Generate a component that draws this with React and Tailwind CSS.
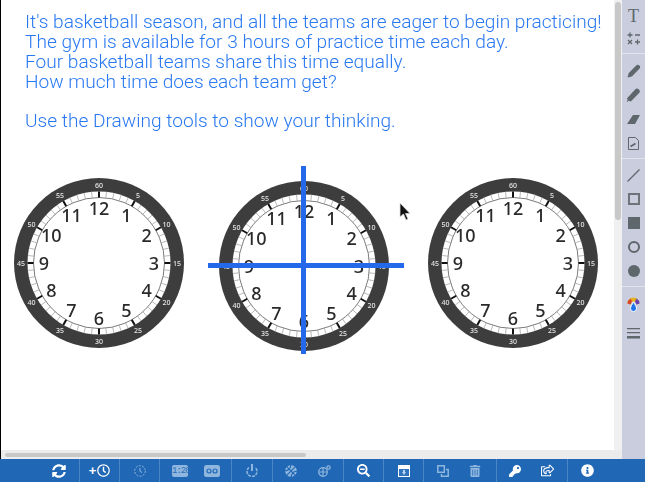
import React from 'react'
import { FaSyncAlt, FaTrashAlt, FaKey, FaInfoCircle, FaSearchMinus, FaRegClock, FaBasketballBall, FaRegShareSquare } from 'react-icons/fa'

const PROMPT = [
  "It's basketball season, and all the teams are eager to begin practicing!",
  'The gym is available for 3 hours of practice time each day.',
  'Four basketball teams share this time equally.',
  'How much time does each team get?',
]

const Clock = ({ className = '', crossed }) => {
  const c = 86
  const ticks = Array.from({ length: 60 }, (_, i) => i)
  const polar = (r, deg) => {
    const a = ((deg - 90) * Math.PI) / 180
    return [c + r * Math.cos(a), c + r * Math.sin(a)]
  }
  return (
    <div className={`relative w-[172px] h-[172px] shrink-0 ${className}`}>
      <svg className="will-change-transform" width="172" height="172" viewBox="0 0 172 172">
        <circle cx={c} cy={c} r="85" fill="#3d3d3d" />
        <circle cx={c} cy={c} r="71.500" fill="#fff" />
        <circle cx={c} cy={c} r="65.500" fill="none" stroke="#444" strokeWidth="0.7" />
        {ticks.map((i) => {
          const big = i % 5 === 0
          const [x1, y1] = polar(big ? 65.5 : 65.5, i * 6)
          const [x2, y2] = polar(71.5, i * 6)
          return <line key={i} x1={x1} y1={y1} x2={x2} y2={y2} stroke={big ? '#111' : '#999'} strokeWidth={big ? 2 : 0.7} />
        })}
        {Array.from({ length: 12 }, (_, i) => {
          const [x, y] = polar(78, (i + 1) * 30)
          return (
            <text key={i} x={x} y={y + 2.5} textAnchor="middle" fontSize="7" fontWeight="500" fill="#e8e8e8" fontFamily="'Noto Sans', sans-serif">
              {(i + 1) * 5}
            </text>
          )
        })}
        {Array.from({ length: 12 }, (_, i) => {
          const [x, y] = polar(55, (i + 1) * 30)
          return (
            <text key={i} x={x} y={y + 6.500} textAnchor="middle" fontSize="18" fontWeight="500" fill="#2a2a2a" fontFamily="'Noto Sans', sans-serif">
              {i + 1}
            </text>
          )
        })}
      </svg>
      {crossed && (
        <>
          <div className="absolute left-[82.500px] top-[-14px] w-[5px] h-[188px] bg-[#2469ea]" />
          <div className="absolute left-[-10px] top-[83px] w-[196px] h-[5px] bg-[#2469ea]" />
        </>
      )}
    </div>
  )
}

const Sep = () => <div className="w-px h-[23px] bg-[#4a86c6] shrink-0" />

const BarIcon = ({ children, dim, w = 'w-[39px]' }) => (
  <div className={`${w} h-[23px] shrink-0 flex items-center justify-center ${dim ? 'text-[#8fb6de]' : 'text-white'}`}>
    {children}
  </div>
)

const Tool = ({ children, h = 'h-6' }) => (
  <div className={`${h} w-full flex items-center justify-center text-[#5d676c]`}>{children}</div>
)

const ToolSep = ({ className }) => <div className={`h-px w-full bg-[#e3e5ec] ${className}`} />

export default function App() {
  return (
    <div className="relative w-[645px] h-[482px] flex flex-col overflow-hidden bg-white">
      <div className="flex flex-1 min-h-0">
        <div className="flex-1 min-w-0 flex flex-col border-l border-black">
          <div className="flex flex-1 min-h-0">
            <div className="flex-1 min-w-0 pt-[12px] font-['Roboto',sans-serif] font-light text-[19.130px] leading-[20px] text-[#2878f2]">
              <div className="pl-[24px] whitespace-nowrap will-change-transform">
                {PROMPT.map((line) => (
                  <div key={line}>{line}</div>
                ))}
                <div className="mt-[19px]">Use the Drawing tools to show your thinking.</div>
              </div>
              <div className="flex items-start mt-[46px] pl-[12px]">
                <Clock />
                <Clock className="ml-[33px] mt-[3px]" crossed />
                <Clock className="ml-[37px]" />
              </div>
            </div>
            <div className="w-[8px] bg-[#f0f0f0] flex justify-center pt-[2px]">
              <div className="w-[6px] h-[218px] bg-[#c8c8c8] rounded-full" />
            </div>
          </div>
          <div className="h-[9px] bg-[#ececec] flex items-center pl-[4px]">
            <div className="w-[301px] h-[4px] bg-[#c8c8c8] rounded-full" />
          </div>
        </div>
        <div className="w-[23px] bg-[#c9cddd] flex flex-col items-center pt-[4px]">
          <Tool h="h-[24px]"><span className="font-['Liberation_Serif',serif] text-[18px] leading-none">T</span></Tool>
          <Tool h="h-[20px]">
            <svg width="13" height="13" viewBox="0 0 13 13" stroke="currentColor" strokeWidth="1.300">
              <path d="M3 0.500v5M0.500 3h5M8 3h5M1 8l4 4M5 8l-4 4M10.500 7.500v5M8 10h5" />
            </svg>
          </Tool>
          <ToolSep className="mt-[5px] mb-[5px]" />
          <Tool>
            <svg width="14" height="14" viewBox="0 0 13 13" fill="currentColor">
              <path d="M0.500 12.500l1-4L8.500 1.500c1-1 2-1 3 0s1 2 0 3l-7 7z" />
            </svg>
          </Tool>
          <Tool>
            <svg width="15" height="15" viewBox="0 0 14 14" fill="currentColor">
              <path d="M0.500 13.500l1-2 -0.500-2L8.500 1.500c1.500-1.500 2.500-1 3.500 0s1.500 2 0 3.500l-7.500 7.500-2-0.500z" />
            </svg>
          </Tool>
          <Tool>
            <svg width="13" height="9" viewBox="0 0 13 9" fill="currentColor"><path d="M0 9L6 0h7L8 9z" /></svg>
          </Tool>
          <Tool>
            <svg width="11" height="13" viewBox="0 0 11 13" fill="none" stroke="currentColor">
              <path d="M0.500 0.500h7l3 3v9H0.500z" />
              <path d="M2.500 9.500l5-3" strokeWidth="1.800" />
            </svg>
          </Tool>
          <ToolSep className="mt-[3px] mb-[4px]" />
          <Tool>
            <svg width="13" height="13" viewBox="0 0 13 13" stroke="currentColor"><path d="M0.500 12.500L12.500 0.500" strokeWidth="1.200" /></svg>
          </Tool>
          <Tool><div className="w-[12px] h-[12px] border-2 border-[#6a7479]" /></Tool>
          <Tool><div className="w-[12px] h-[12px] bg-[#5d676c]" /></Tool>
          <Tool><div className="w-[12px] h-[12px] rounded-full border-2 border-[#5d676c]" /></Tool>
          <Tool><div className="w-[12px] h-[12px] rounded-full bg-[#5d676c]" /></Tool>
          <ToolSep className="mt-[3px] mb-[5px]" />
          <Tool>
            <svg width="13" height="17" viewBox="0 0 13 16">
              <path d="M0.500 7a6 6 0 0 1 12 0l-3 1a3 3 0 0 0-6 0z" fill="#e8b21e" />
              <path d="M0.500 7a6 6 0 0 1 3-5l1.500 3-1.500 3z" fill="#d9452b" />
              <path d="M12.500 7a6 6 0 0 0-3-5L8 5l1.500 3z" fill="#6a3fb5" />
              <path d="M6.500 5.500c1.500 2.500 3 4.500 3 6.500a3 3 0 0 1-6 0c0-2 1.500-4 3-6.500z" fill="#1e73e8" stroke="#fff" />
            </svg>
          </Tool>
          <Tool h="h-6 mt-[5px]">
            <svg width="13" height="12" viewBox="0 0 13 12" fill="currentColor"><path d="M0 1h13v1.300H0zM0 5h13v1.300H0zM0 9h13v2.500H0z" /></svg>
          </Tool>
        </div>
      </div>
      <div className="h-[23px] bg-[#2068b5] flex items-center pl-[39px] shrink-0">
        <BarIcon w="w-[40px]"><FaSyncAlt size={14} /></BarIcon>
        <Sep />
        <BarIcon>
          <span className="flex items-center gap-px"><span className="text-[13px] leading-none font-bold font-['Liberation_Sans',sans-serif]">+</span><FaRegClock size={13} /></span>
        </BarIcon>
        <Sep />
        <BarIcon dim>
          <svg width="12" height="12" viewBox="0 0 12 12" fill="none" stroke="currentColor"><circle cx="6" cy="6" r="5.300" strokeDasharray="2 1.300" /><path d="M6 3v3.300l2 1.200" /></svg>
        </BarIcon>
        <Sep />
        <BarIcon dim w="w-[40px]">
          <span className="w-[16px] h-[12px] bg-[#8fb6de] rounded-[2px] text-[#2c6fb8] text-[9px] leading-[12px] text-center font-['Liberation_Mono',monospace] tracking-[-1px]">1:20</span>
        </BarIcon>
        <BarIcon dim w="w-[31px] pr-[7px]">
          <svg width="16" height="12" viewBox="0 0 16 12"><rect width="16" height="12" rx="2.500" fill="currentColor" /><circle cx="5" cy="6" r="2" fill="none" stroke="#2068b5" strokeWidth="1.200" /><circle cx="11" cy="6" r="2" fill="none" stroke="#2068b5" strokeWidth="1.200" /></svg>
        </BarIcon>
        <Sep />
        <BarIcon dim w="w-[40px]">
          <svg width="12" height="13" viewBox="0 0 12 13" fill="none" stroke="currentColor" strokeWidth="1.500"><path d="M6 0v7" strokeWidth="2" /><path d="M3 3.500a5 5 0 1 0 6 0" strokeDasharray="3 1" /></svg>
        </BarIcon>
        <Sep />
        <BarIcon dim w="w-[36px]"><FaBasketballBall size={12} /></BarIcon>
        <BarIcon dim w="w-[34px] pr-[4px]">
          <svg width="13" height="12" viewBox="0 0 13 12" fill="none" stroke="currentColor" strokeWidth="1.200"><circle cx="5" cy="7" r="4.300" /><path d="M5 3v8M1 7h8" /><circle cx="10.500" cy="2.500" r="1.700" /></svg>
        </BarIcon>
        <Sep />
        <BarIcon><FaSearchMinus size={13} /></BarIcon>
        <Sep />
        <BarIcon>
          <svg width="12" height="12" viewBox="0 0 12 12"><rect width="12" height="12" fill="#fff" /><rect x="1" y="4" width="10" height="7" fill="#2f74bd" /><path d="M5 5h2v2h1L6 10 4 7h1z" fill="#bcd5ee" /></svg>
        </BarIcon>
        <Sep />
        <BarIcon dim w="w-[38px]">
          <svg width="12" height="12" viewBox="0 0 12 12" fill="none" stroke="currentColor" strokeWidth="1.500"><rect x="0.800" y="0.800" width="6.500" height="6.500" /><path d="M9 4.500h2.200v6.700H4.500V9" /></svg>
        </BarIcon>
        <BarIcon dim w="w-[34px] pr-[8px]"><FaTrashAlt size={12} /></BarIcon>
        <Sep />
        <BarIcon w="w-[36px]"><FaKey size={12} /></BarIcon>
        <BarIcon w="w-[34px] pr-[6px]"><FaRegShareSquare size={13} /></BarIcon>
        <Sep />
        <BarIcon w="w-[38px]"><FaInfoCircle size={13} /></BarIcon>
      </div>
      <svg className="absolute left-[399px] top-[202px]" width="13" height="20" viewBox="0 0 13 20">
        <path d="M1 1v14l3.500-3 2.500 6 2-1-2.500-5.500H11z" fill="#111" stroke="#ddd" strokeWidth="0.800" />
      </svg>
    </div>
  )
}
